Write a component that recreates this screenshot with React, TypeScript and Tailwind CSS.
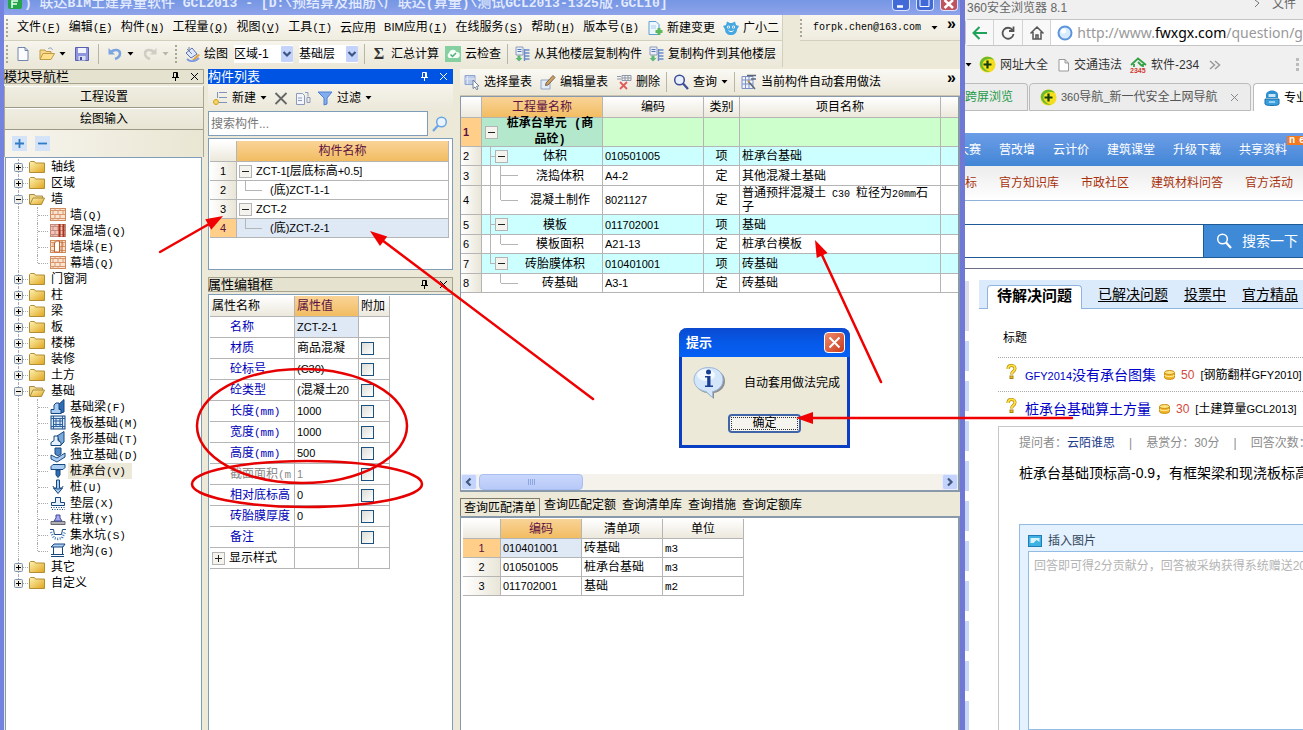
import { Fragment, type ReactNode } from "react";
import clsx from "clsx";

// Splits a label so that latin runs can use a narrower face than the hanzi
function Txt({ children, latin = "text-[11px]" }: { children: string; latin?: string }) {
  return (
    <>
      {children.split(/([\x20-\x7e]+)/).map((part, i) =>
        i % 2 ? (
          <span key={i} className={clsx("whitespace-pre-wrap", latin)}>{part}</span>
        ) : (
          <Fragment key={i}>{part}</Fragment>
        )
      )}
    </>
  );
}

const MONO = "font-['Liberation_Mono','Noto_Sans_CJK_SC',monospace] text-[11px]";

/* ---------- small shared pieces ---------- */

function Caret({ dim }: { dim?: boolean }) {
  return (
    <svg width="7" height="4" viewBox="0 0 7 4" className="shrink-0">
      <path d="M0.5 0h6L3.5 3.5z" fill={dim ? "#b8b5a8" : "#000"} />
    </svg>
  );
}

function Grip() {
  return (
    <svg width="3" height="20" viewBox="0 0 3 20" className="shrink-0">
      {[1, 5, 9, 13, 17].map((y) => (
        <rect key={y} x="0" y={y} width="2" height="2" fill="#a9a695" />
      ))}
    </svg>
  );
}

function Sep() {
  return <span className="h-5 w-px shrink-0 bg-[#b9b6a4]" />;
}

function ToggleBox({ plus }: { plus?: boolean }) {
  return (
    <svg width="13" height="13" viewBox="0 0 13 13" className="shrink-0">
      <rect x="0.5" y="0.5" width="12" height="12" fill="#f4f3ee" stroke="#b4b4b4" />
      <path d={plus ? "M3 6.5h7M6.5 3v7" : "M3 6.5h7"} stroke="#222" />
    </svg>
  );
}

function Pin({ color = "#000" }: { color?: string }) {
  return (
    <svg width="9" height="9" viewBox="0 0 9 9">
      <path d="M2.5 5V0.5h4V5M5.5 0.5V5M1 5.5h7M4.5 5.5V9" fill="none" stroke={color} />
    </svg>
  );
}

function Cross({ color = "#000" }: { color?: string }) {
  return (
    <svg width="9" height="9" viewBox="0 0 9 9">
      <path d="M1 1l7 7M8 1l-7 7" stroke={color} />
    </svg>
  );
}

function PanelTitle({ title, active }: { title: string; active?: boolean }) {
  const color = active ? "#fff" : "#000";
  return (
    <div
      className={clsx(
        "flex h-[15px] shrink-0 items-center border text-[13px] leading-[13px]",
        active ? "border-[#0054e3] bg-[#0054e3] text-white" : "border-[#a5a28f] bg-[#e6e2d0] text-black"
      )}
    >
      <h2 className="-ml-px flex-1">{title}</h2>
      <button type="button" aria-label="固定" className="mr-2.5"><Pin color={color} /></button>
      <button type="button" aria-label="关闭" className="mr-1"><Cross color={color} /></button>
    </div>
  );
}

/* ---------- toolbar icons ---------- */

function Ico({ children, size = 16 }: { children: ReactNode; size?: number }) {
  return (
    <svg width={size} height={size} viewBox="0 0 16 16" fill="none" className="shrink-0">{children}</svg>
  );
}

const NewDoc = () => (
  <Ico><path d="M3 1.5h7l3 3v10H3z" fill="#fbfcff" stroke="#7286ad" /><path d="M10 1.5v3h3" stroke="#7286ad" /></Ico>
);
const OpenDoc = () => (
  <Ico>
    <path d="M1 13V4h5l1 1.5h5V8" fill="#f6d888" stroke="#c09a48" />
    <path d="M1 13.5L4 7.5h11.5L12 13.5z" fill="#ffe08a" stroke="#c09a48" />
    <path d="M9 3c2-2 4-1 4.500 1" stroke="#8a9ab8" />
  </Ico>
);
const SaveDoc = () => (
  <Ico>
    <path d="M1.500 1.500h13v13h-13z" fill="#8f96de" stroke="#5a60b0" />
    <path d="M4 2h8v5H4z" fill="#f2f4ff" /><path d="M4.500 10h7v4.500h-7z" fill="#d8dcf4" /><path d="M6 11h2v3H6z" fill="#454b9a" />
  </Ico>
);
const Undo = ({ dim, flip }: { dim?: boolean; flip?: boolean }) => (
  <Ico>
    <g transform={flip ? "translate(16 0) scale(-1 1)" : undefined}>
      <path d="M4 6c3-3 9-3 9 1.500 0 3-2 4.500-5 5.500" stroke={dim ? "#cfcdc4" : "#7ba4e0"} strokeWidth="2.500" />
      <path d="M1.500 2v6.500h6.500z" fill={dim ? "#cfcdc4" : "#7ba4e0"} />
    </g>
  </Ico>
);
const Paint = () => (
  <Ico>
    <path d="M2 7l6-5 5 6-6 4z" fill="#dfe9fb" stroke="#5674ae" /><path d="M3 3l5 5M5 1v4" stroke="#6f7f9e" />
    <path d="M8 14l6-6 2 1-6 6z" fill="#e8a23c" /><path d="M3 13c3 3 8 3 12-1" stroke="#7d9be0" strokeWidth="2" />
  </Ico>
);
const CloudCheck = () => (
  <Ico>
    <rect width="16" height="16" fill="#86cfa0" />
    <path d="M4 12a3 3 0 0 1 0-5 4 4 0 0 1 7.500-1A3 3 0 0 1 12 12z" fill="#f5fff8" /><path d="M5.500 8.500l2 2 3.500-3.500" stroke="#4fae74" strokeWidth="1.500" />
  </Ico>
);
const CopyFloor = () => (
  <Ico>
    <path d="M2 1h7v8H2z" fill="#e9eefa" stroke="#8f9cb8" /><path d="M3.500 3.500h4M3.500 5.500h4" stroke="#5576b4" />
    <path d="M10.500 4h5M10.500 7h5M10.500 10h5M10.500 13h5M10.500 3v12" stroke="#6a8cca" strokeWidth="1.500" />
    <path d="M3.500 9.500h3v2.500h2L5 15.500 1.500 12h2z" fill="#5cb874" />
  </Ico>
);
const NewChange = () => (
  <Ico>
    <path d="M2 1.500h7l3 3v10H2z" fill="#eef7ff" stroke="#5f9ed0" /><path d="M4 6h5M4 8h5" stroke="#a8cdea" />
    <path d="M12 8v7M8.500 11.500h7" stroke="#5cb85c" strokeWidth="3" />
  </Ico>
);
const Mascot = () => (
  <Ico>
    <path d="M0 6l3-1 1-3.500 3 1.500h2l3-1.500L13 5l3 1-2 3.500c0 3.500-2.500 5.500-6 5.500s-6-2-6-5.500z" fill="#46a8e2" />
    <circle cx="5.500" cy="7" r="1.500" fill="#fff" /><circle cx="10.500" cy="7" r="1.500" fill="#fff" />
    <circle cx="5.500" cy="7" r="0.600" fill="#124a78" /><circle cx="10.500" cy="7" r="0.600" fill="#124a78" />
    <path d="M5.500 10.500c1.500 1.500 3.500 1.500 5 0" stroke="#fff" />
  </Ico>
);
const NewItem = () => (
  <Ico><path d="M7 2.500h8M7 7.500h8M7 12.500h8M5.500 2v6" stroke="#7d93c0" /><path d="M4 9v6M1 12h6" stroke="#d9ab28" strokeWidth="3" /><path d="M4 10v4M2 12h4" stroke="#ffe680" /></Ico>
);
const Delete = () => (
  <Ico><path d="M2.500 3l11 11M13.500 3l-11 11" stroke="#666" strokeWidth="1.800" /></Ico>
);
const CopyItem = () => (
  <Ico><path d="M1.500 3.500h6l2 2v9h-8z" fill="#f2f5fb" stroke="#8b9bbd" /><path d="M3 8h4M3 10.500h4" stroke="#8b9bbd" /><path d="M10 2.500h3v4M12 12.500h3v-5h-3z" stroke="#8b9bbd" /></Ico>
);
const Funnel = () => (
  <Ico><path d="M1 2h14L10 8v6l-3 1V8z" fill="#82aef0" stroke="#4e80d0" /></Ico>
);
const Magnifier = ({ color = "#3d4c94", fill = "#e8f0ff" }: { color?: string; fill?: string }) => (
  <Ico><circle cx="6.500" cy="6" r="4.800" fill={fill} stroke={color} strokeWidth="1.500" /><path d="M10 9.500l5 5.500" stroke={color} strokeWidth="2.200" /></Ico>
);
const PickTable = () => (
  <Ico><path d="M1 1.500h10v9H1z" fill="#bccbe8" stroke="#8fa5cf" /><path d="M3.500 2v8M1 5h10" stroke="#dfe8f8" /><path d="M9 6l6 6-2.500.3 1.500 2.700-1.500.7-1.500-2.700L9 14.500z" fill="#fff" stroke="#70809c" /></Ico>
);
const EditTable = () => (
  <Ico><path d="M1 6h9v9H1z" fill="#e4ecf8" stroke="#94a7c6" /><path d="M6 9l7-7.500 2 2L8 11l-2.500.5z" fill="#d0a060" stroke="#7a6450" /></Ico>
);
const DropTable = () => (
  <Ico><path d="M1 2.500h4M1 5h4M6 1.500h9v5H6zM9 2v4M12 2v4M6 4h9" stroke="#8d97ab" /><path d="M4 8l7 7M11 8l-7 7" stroke="#e05c5c" strokeWidth="1.800" /></Ico>
);
const AutoApply = () => (
  <Ico><path d="M1 2.500h11v12H1zM1 6h11M1 10h11M4.500 3v11M8 3v11" fill="#eef2fc" stroke="#7d8fc4" /><path d="M6 1.500h9M10 5h5M7 7l7 8" stroke="#5c6578" strokeWidth="1.500" /><path d="M6 6l3 1-1 2z" fill="#d8a23a" /></Ico>
);

function Tool({ icon, label, caret, dim }: { icon?: ReactNode; label?: string; caret?: boolean; dim?: boolean }) {
  return (
    <button type="button" className="flex shrink-0 items-center gap-1 whitespace-nowrap" aria-label={label ?? "工具"}>
      {icon}
      {label && <span>{label}</span>}
      {caret && <Caret dim={dim} />}
    </button>
  );
}

function Combo({ id, value }: { id: string; value: string }) {
  return (
    <div className="flex h-[18px] w-[59px] shrink-0 items-center bg-white">
      <label htmlFor={id} className="sr-only">{value}</label>
      <select id={id} className="h-full w-[47px] appearance-none bg-white p-0 text-xs leading-4 outline-none">
        <option>{value}</option>
      </select>
      <svg width="12" height="16" viewBox="0 0 12 16" className="shrink-0">
        <rect width="12" height="16" rx="1" fill="#c3d3fb" />
        <path d="M2.500 6L6 9.500 9.500 6" fill="none" stroke="#3d5583" strokeWidth="2.200" />
      </svg>
    </div>
  );
}

/* ---------- window chrome ---------- */

const menus: [string, string?][] = [
  ["文件", "F"], ["编辑", "E"], ["构件", "N"], ["工程量", "Q"], ["视图", "V"], ["工具", "T"],
  ["云应用"], ["BIM应用", "I"], ["在线服务", "S"], ["帮助", "H"], ["版本号", "B"],
];

function TitleBar() {
  return (
    <header className="flex h-[15px] shrink-0 items-start overflow-hidden bg-gradient-to-b from-[#7596e4] to-[#8fa3ea] pl-1 text-[#e3ebff]">
      <svg width="14" height="10" viewBox="0 0 14 10" className="shrink-0">
        <path d="M0 0h14v7a2 2 0 0 1-2 2H2a2 2 0 0 1-2-2z" fill="#25a549" />
        <path d="M4 8V1h6M4 4h5" fill="none" stroke="#e8fff0" strokeWidth="1.500" />
      </svg>
      <h1 className="flex-1 pl-0.5 text-sm leading-[5px] font-medium whitespace-nowrap">
        <Txt latin="font-['Liberation_Mono',monospace] text-[13px] font-bold">
          {") 联达BIM土建算量软件 GCL2013 - [D:\\预结算及抽筋\\广联达(算量)\\测试GCL2013-1325版.GCL10]"}
        </Txt>
      </h1>
      <div className="flex gap-1.5 pr-0.5">
        {["最小化", "最大化", "关闭"].map((name, i) => (
          <button
            key={name}
            type="button"
            aria-label={name}
            className={clsx("h-[11px] w-[18px] rounded-b border border-t-0 border-[#dbe4ff]", i === 2 ? "bg-[#c0545c]" : "bg-[#4169d8]")}
          >
            <svg width="16" height="10" viewBox="0 0 16 10">
              <path d={["M4 6.500h6", "M3 0v6.500h9V0", "M3.500 0L12 8M12 0L3.500 8"][i]} fill="none" stroke="#fff" strokeWidth={i === 1 ? 1 : 2.500} />
            </svg>
          </button>
        ))}
      </div>
    </header>
  );
}

function MenuBar() {
  return (
    <div className="flex h-[26px] shrink-0">
      <nav className="flex w-[779px] items-center gap-2 border-r border-b border-[#d3cfbd] bg-gradient-to-b from-[#fbfaf6] to-[#efecdf] pl-0.5 whitespace-nowrap">
        <Grip />
        {menus.map(([label, key]) => (
          <button key={label} type="button" className="flex items-baseline">
            <Txt>{label}</Txt>
            {key && <span className={MONO}>(<u>{key}</u>)</span>}
          </button>
        ))}
        <Tool icon={<NewChange />} label="新建变更" />
        <Tool icon={<Mascot />} label="广小二" />
      </nav>
      <div className="ml-[17px] flex flex-1 items-center border-b border-[#d3cfbd] bg-gradient-to-b from-[#f8f6ee] to-[#efecdf]">
        <Grip />
        <button type="button" className="ml-2.5 flex items-center gap-2.5 font-['Liberation_Mono',monospace] text-[10px]">
          forpk.chen@163.com <Caret />
        </button>
        <span className="mr-1 mb-2 ml-auto text-base leading-4 font-bold">»</span>
      </div>
    </div>
  );
}

function MainToolbar() {
  return (
    <div className="flex h-[26px] shrink-0 items-center">
      <div className="flex h-full w-[779px] items-center border-r border-[#d3cfbd] bg-gradient-to-b from-[#f6f4ec] to-[#ebe8d9] pl-0.5">
        <Grip />
        <div className="ml-1.5 flex items-center gap-2">
          <Tool icon={<NewDoc />} />
          <Tool icon={<OpenDoc />} caret />
          <Tool icon={<SaveDoc />} />
          <Sep />
          <Tool icon={<Undo />} caret />
          <Tool icon={<Undo dim flip />} caret dim />
        </div>
        <div className="ml-1.5 flex items-center gap-1.5">
          <Grip />
          <Tool icon={<Paint />} label="绘图" />
          <Combo id="area" value="区域-1" />
          <Combo id="floor" value="基础层" />
          <Sep />
          <Tool icon={<span className="w-4 text-center font-['Liberation_Serif',serif] text-base leading-4 font-bold text-[#333]">Σ</span>} label="汇总计算" />
          <Tool icon={<CloudCheck />} label="云检查" />
          <Sep />
          <Tool icon={<CopyFloor />} label="从其他楼层复制构件" />
          <Tool icon={<CopyFloor />} label="复制构件到其他楼层" />
        </div>
      </div>
    </div>
  );
}

/* ---------- module tree ---------- */

function Folder({ open }: { open?: boolean }) {
  return (
    <svg width="16" height="12" viewBox="0 0 16 12" className="shrink-0">
      <defs>
        <linearGradient id="fold" x1="0" y1="0" x2="1" y2="1">
          <stop offset="0" stopColor="#fff3b4" />
          <stop offset="1" stopColor="#e0a51e" />
        </linearGradient>
      </defs>
      {open ? (
        <>
          <path d="M0.500 11V1.500h5l1 1.500h7V6" fill="#f5dc8c" stroke="#a88b3d" />
          <path d="M1 11.500L4 5h11.500L12.500 11.500z" fill="url(#fold)" stroke="#a88b3d" />
        </>
      ) : (
        <path d="M0.500 11.500V1.500l1-1h4l1 1.500h9v9.500z" fill="url(#fold)" stroke="#b38f33" />
      )}
    </svg>
  );
}

const brick = "M0 3.500h15M0 7.500h15M0 11.500h15M5 1v3M10 1v3M3 4v4M8 4v4M13 4v4M5 8v4M10 8v4M3 12v2M8 12v2";
const blue = { fill: "#a9cdf2", stroke: "#17477f" };
const leafIcons: Record<string, ReactNode> = {
  wall: <><rect x="0.500" y="1.500" width="15" height="12" fill="#fbe3d2" stroke="#d08a5c" /><path d={brick} stroke="#d9966a" /></>,
  warm: <><rect x="0.500" y="1.500" width="15" height="12" fill="#f4c4b4" stroke="#c58878" /><path d={brick} stroke="#c08d84" /><path d="M9.500 1v13M13.500 1v13" stroke="#a8341c" strokeWidth="2" /></>,
  pier: <><rect x="0.500" y="1.500" width="15" height="12" fill="#fbe3d2" stroke="#d08a5c" /><path d={brick} stroke="#d9966a" /><path d="M4.500 13V4l2-2h3v11zM12 2v12" fill="#fff" stroke="#c0602c" /></>,
  beam: <><path d="M8 6l6-5.500V13l-4 1.500z" fill="#2f6db4" stroke="#17477f" /><path d="M1 14.500v-4h3V6l2-2h3v6.500h2v4z" {...blue} /></>,
  raft: <><rect x="1" y="1" width="14" height="13" fill="#d6e8fa" stroke="#17477f" /><path d="M3.500 1v13M6 3.500v8M10 3.500v8M12.500 1v13M1 3.500h14M3 6h10M3 9.500h10M1 11.500h14" stroke="#2c5f9c" /></>,
  strip: <><path d="M7 5l7-4.500V11l-3 3z" fill="#7aaada" stroke="#17477f" /><path d="M1 14.500v-3l3-2V5h4v4.500l3 2v3z" fill="#e4f0fc" stroke="#17477f" /></>,
  solo: <><path d="M1 8l6 3 8-5v4l-8 5-6-3z" {...blue} /><path d="M5 1h6v6l-3 2-3-2z" fill="#4f88c6" stroke="#17477f" /></>,
  cap: <><path d="M1 3.500l2-2h12v3l-2 2H1z" {...blue} /><path d="M6 7h4v5l-2 2.500L6 12z" fill="#2f6db4" stroke="#17477f" /></>,
  pile: <><path d="M6.500 1h3v8h3L8 14.500 3.500 9h3z" {...blue} /><path d="M3 7c0 4 10 4 10 0" stroke="#17477f" /></>,
  pad: <><path d="M5.500 2.500h5v5h4v3h-13v-3h4z" fill="#e4f0fc" stroke="#17477f" /><path d="M1 12.500h14M2 14.500h13" stroke="#17477f" strokeDasharray="1 1.500" /></>,
  pedestal: <><path d="M1 10.500h14v3H1z" fill="#b0b0b6" stroke="#66666c" /><path d="M4 10l2-3V4h4v3l2 3z" fill="#a9a9f0" stroke="#3b4a9a" /></>,
  pit: <><path d="M0 2.500h3.500l1 5h7l1-5H16" stroke="#17477f" /><path d="M1 5l3 6 4 1 4-1 3-6" stroke="#4178b8" strokeWidth="2.500" strokeDasharray="1 1.500" /></>,
  trench: <><path d="M1 4l3-3h11l-2 3zM3.500 4v8M12.500 4v8" {...blue} /><path d="M1 13.500h13M1 11.500h13" stroke="#17477f" /></>,
};

type Node = { label: string; key?: string; icon?: string; open?: boolean; last?: boolean; selected?: boolean };

const tree: Node[] = [
  { label: "轴线" },
  { label: "区域" },
  { label: "墙", open: true },
  { label: "墙", key: "Q", icon: "wall" },
  { label: "保温墙", key: "Q", icon: "warm" },
  { label: "墙垛", key: "E", icon: "pier" },
  { label: "幕墙", key: "Q", icon: "wall", last: true },
  { label: "门窗洞" },
  { label: "柱" },
  { label: "梁" },
  { label: "板" },
  { label: "楼梯" },
  { label: "装修" },
  { label: "土方" },
  { label: "基础", open: true },
  { label: "基础梁", key: "F", icon: "beam" },
  { label: "筏板基础", key: "M", icon: "raft" },
  { label: "条形基础", key: "T", icon: "strip" },
  { label: "独立基础", key: "D", icon: "solo" },
  { label: "桩承台", key: "V", icon: "cap", selected: true },
  { label: "桩", key: "U", icon: "pile" },
  { label: "垫层", key: "X", icon: "pad" },
  { label: "柱墩", key: "Y", icon: "pedestal" },
  { label: "集水坑", key: "S", icon: "pit" },
  { label: "地沟", key: "G", icon: "trench", last: true },
  { label: "其它" },
  { label: "自定义", last: true },
];

function TreeRow({ node }: { node: Node }) {
  if (node.icon) {
    return (
      <li className="flex h-4 items-center">
        <span className="ml-3 h-full w-[19px] border-l border-dotted border-[#aaa]" />
        <span className={clsx("self-start border-l border-dotted border-[#aaa]", node.last ? "h-1/2" : "h-full")} />
        <span className="mr-0.5 w-[10px] border-t border-dotted border-[#aaa]" />
        <Ico>{leafIcons[node.icon]}</Ico>
        <span className={clsx("ml-0.5 h-4 pr-1.5 pl-0.5", node.selected && "bg-[#ece9d8]")}>
          {node.label}
          <span className={MONO}>({node.key})</span>
        </span>
      </li>
    );
  }
  return (
    <li className="flex h-4 items-center">
      <span className="ml-2 flex h-full w-[9px] flex-col items-center">
        <span className="flex-1 border-l border-dotted border-[#aaa]" />
        <svg width="9" height="9" viewBox="0 0 9 9" className="shrink-0">
          <rect x="0.500" y="0.500" width="8" height="8" rx="1" fill="#f1efe6" stroke="#7f93ad" />
          <path d={node.open ? "M2 4.500h5" : "M2 4.500h5M4.500 2v5"} stroke="#000" />
        </svg>
        <span className={clsx("flex-1", !node.last && "border-l border-dotted border-[#aaa]")} />
      </span>
      <span className="mr-px w-[5px] border-t border-dotted border-[#aaa]" />
      <Folder open={node.open} />
      <span className="ml-1.5">{node.label}</span>
    </li>
  );
}

function ModulePanel() {
  return (
    <aside className="flex w-[200px] shrink-0 flex-col">
      <PanelTitle title="模块导航栏" />
      <div className="mt-0.5 flex flex-col border-x border-[#aaa793]">
        {["工程设置", "绘图输入"].map((t) => (
          <button key={t} type="button" className="h-[22px] border-b border-[#9c9986] bg-gradient-to-b from-[#f0eee2] to-[#e8e5d4] shadow-[inset_0_1px_0_#fff]">{t}</button>
        ))}
      </div>
      <div className="flex h-[27px] shrink-0 items-center gap-2 border-x border-[#aaa793] bg-gradient-to-r from-[#f7f5ee] to-[#e9e6d3] pl-[7px]">
        {["M3 7.500h9M7.500 3v9", "M3 7.500h9"].map((d, i) => (
          <button key={d} type="button" aria-label={i ? "折叠" : "展开"}>
            <svg width="15" height="15" viewBox="0 0 15 15">
              <rect width="15" height="15" fill="#d5e3f8" />
              <path d={d} stroke="#2f7cc4" strokeWidth="1.800" />
            </svg>
          </button>
        ))}
      </div>
      <ul className="mr-0.5 ml-px min-h-0 flex-1 overflow-hidden border border-b-0 border-[#7f9db9] bg-white pt-px">
        {tree.map((node, i) => (
          <TreeRow key={i} node={node} />
        ))}
      </ul>
    </aside>
  );
}

/* ---------- grids ---------- */

const cell = "border-r border-b border-[#b5b5b5] p-0";
const head = "bg-gradient-to-b from-white to-[#ece8dc] font-normal";
const headOn = "bg-gradient-to-b from-[#f9d396] to-[#f2bd61] font-normal text-[#5e1040]";
const num = "bg-gradient-to-r from-white to-[#e9e6d8] text-[11px]";
const numOn = "bg-[#ffcf8a] text-[11px] text-[#5e1040]";

const components = [
  { name: "ZCT-1[层底标高+0.5]" },
  { name: "(底)ZCT-1-1", leaf: true },
  { name: "ZCT-2" },
  { name: "(底)ZCT-2-1", leaf: true, on: true },
];

function ComponentGrid() {
  return (
    <div className="h-[132px] shrink-0 border border-[#7f9db9] bg-white pt-0.5 pr-[3px] pl-px">
      <table className="w-full table-fixed border-separate border-spacing-0">
        <colgroup><col className="w-[27px]" /><col /></colgroup>
        <thead>
          <tr>
            <th className={clsx(cell, head, "h-[21px]")} />
            <th className={clsx(cell, headOn)}>构件名称</th>
          </tr>
        </thead>
        <tbody>
          {components.map((c, i) => (
            <tr key={c.name}>
              <td className={clsx(cell, "h-[19px] text-center", c.on ? numOn : num)}>{i + 1}</td>
              <td className={clsx(cell, c.on && "bg-[#dfe8f5]")}>
                <div className="flex h-[18px] items-center pl-0.5">
                  {c.leaf ? (
                    <span className="mr-2 ml-1.5 h-[10px] w-[17px] self-start border-b border-l border-[#b5b5b5]" />
                  ) : (
                    <span className="mr-1 flex"><ToggleBox /></span>
                  )}
                  <span><Txt>{c.name}</Txt></span>
                </div>
              </td>
            </tr>
          ))}
        </tbody>
      </table>
    </div>
  );
}

const props: { name: string; value?: string; check?: boolean; tone?: string; on?: boolean }[] = [
  { name: "名称", value: "ZCT-2-1", on: true },
  { name: "材质", value: "商品混凝", check: true },
  { name: "砼标号", value: "(C30)", check: true },
  { name: "砼类型", value: "(混凝土20", check: true },
  { name: "长度(mm)", value: "1000", check: true },
  { name: "宽度(mm)", value: "1000", check: true },
  { name: "高度(mm)", value: "500", check: true },
  { name: "截面面积(m", value: "1", check: true, tone: "text-[#8a8a8a]" },
  { name: "相对底标高", value: "0", check: true },
  { name: "砖胎膜厚度", value: "0", check: true },
  { name: "备注", check: true },
];

function PropertyGrid() {
  return (
    <div className="mt-0.5 min-h-0 flex-1 overflow-hidden border border-b-0 border-[#7f9db9] bg-white pt-px pl-px">
      <table className="table-fixed border-separate border-spacing-0 whitespace-nowrap">
        <colgroup><col className="w-[85px]" /><col className="w-[64px]" /><col className="w-[31px]" /></colgroup>
        <thead>
          <tr className="text-left">
            <th className={clsx(cell, head, "h-[21px] pl-0.5")}>属性名称</th>
            <th className={clsx(cell, headOn, "pl-0.5")}>属性值</th>
            <th className={clsx(cell, head, "pl-0.5")}>附加</th>
          </tr>
        </thead>
        <tbody>
          {props.map((p) => (
            <tr key={p.name}>
              <td className={clsx(cell, "h-[21px] pl-5", p.tone ?? "text-[#0000b8]")}><Txt latin={MONO}>{p.name}</Txt></td>
              <td className={clsx(cell, "pl-0.5", p.on && "bg-[#dfe8f5]", p.tone)}><Txt>{p.value ?? ""}</Txt></td>
              <td className={cell}>
                {p.check && (
                  <input
                    type="checkbox"
                    aria-label={p.name}
                    className="ml-0.5 block size-[13px] appearance-none border border-[#1c5180] bg-gradient-to-br from-[#dcdcd7] to-white"
                  />
                )}
              </td>
            </tr>
          ))}
          <tr>
            <td className={clsx(cell, "h-[21px]")}>
              <div className="flex items-center gap-1 pl-0.5">
                <ToggleBox plus />
                显示样式
              </div>
            </td>
            <td className={cell} />
            <td className={cell} />
          </tr>
        </tbody>
      </table>
    </div>
  );
}

function ComponentPanel() {
  return (
    <section className="flex w-[245px] shrink-0 flex-col">
      <PanelTitle title="构件列表" active />
      <div className="flex h-[27px] shrink-0 items-center gap-1.5 bg-gradient-to-b from-[#f6f4ec] to-[#ebe8d9] pl-1">
        <Tool icon={<NewItem />} label="新建" caret />
        <Tool icon={<Delete />} />
        <Tool icon={<CopyItem />} />
        <Tool icon={<Funnel />} label="过滤" caret />
      </div>
      <div className="mb-0.5 flex h-[25px] shrink-0 items-center">
        <label htmlFor="search-component" className="sr-only">搜索构件</label>
        <input
          id="search-component"
          placeholder="搜索构件..."
          className="h-full min-w-0 flex-1 border border-[#7f9db9] bg-white px-0.5 text-xs outline-none placeholder:text-[#777]"
        />
        <button type="button" aria-label="搜索" className="flex w-[25px] -scale-x-100 justify-center">
          <Magnifier color="#6aa6e6" fill="#eaf4ff" />
        </button>
      </div>
      <ComponentGrid />
      <div className="mt-[7px] flex flex-col"><PanelTitle title="属性编辑框" /></div>
      <PropertyGrid />
    </section>
  );
}

type Item = { level: 0 | 1 | 2; name: string; code?: string; kind?: string; title?: string; tall?: boolean; last?: boolean; end?: boolean };

const items: Item[] = [
  { level: 0, name: "桩承台单元 (商品砼)", tall: true },
  { level: 1, name: "体积", code: "010501005", kind: "项", title: "桩承台基础" },
  { level: 2, name: "浇捣体积", code: "A4-2", kind: "定", title: "其他混凝土基础" },
  { level: 2, name: "混凝土制作", code: "8021127", kind: "定", title: "普通预拌混凝土 C30 粒径为20mm石子", tall: true, last: true },
  { level: 1, name: "模板", code: "011702001", kind: "项", title: "基础" },
  { level: 2, name: "模板面积", code: "A21-13", kind: "定", title: "桩承台模板", last: true },
  { level: 1, name: "砖胎膜体积", code: "010401001", kind: "项", title: "砖基础", last: true },
  { level: 2, name: "砖基础", code: "A3-1", kind: "定", title: "砖基础", last: true, end: true },
];

const line = "border-[#b5b5b5]";

function Branch({ item }: { item: Item }) {
  if (item.level === 0) return <span className="ml-[3px] flex self-center"><ToggleBox /></span>;
  if (item.level === 1) {
    return (
      <>
        <span className={clsx("ml-2 w-px border-l", line, item.last ? "h-1/2" : "h-full")} />
        <span className={clsx("w-[4px] self-center border-t", line)} />
        <span className="flex self-center"><ToggleBox /></span>
      </>
    );
  }
  return (
    <>
      <span className={clsx("ml-2 w-[10px] border-l", item.end ? "border-transparent" : line)} />
      <span className={clsx("border-l", line, item.last ? "h-1/2" : "h-full")} />
      <span className={clsx("w-[17px] self-center border-t", line)} />
    </>
  );
}

function QuantityGrid() {
  const tint = ["bg-[#ccffcc]", "bg-[#ccffff]", "bg-white"];
  return (
    <table className="w-full table-fixed border-separate border-spacing-0">
      <colgroup>
        <col className="w-[21px]" /><col className="w-[121px]" /><col className="w-[101px]" /><col className="w-[36px]" /><col className="w-[201px]" /><col />
      </colgroup>
      <thead>
        <tr>
          <th className={clsx(cell, head, "h-[21px]")} />
          <th className={clsx(cell, headOn)}>工程量名称</th>
          <th className={clsx(cell, head)}>编码</th>
          <th className={clsx(cell, head)}>类别</th>
          <th className={clsx(cell, head)}>项目名称</th>
          <th className={clsx(cell, head, "border-r-0")} />
        </tr>
      </thead>
      <tbody>
        {items.map((it, i) => (
          <tr key={i} className={tint[it.level]}>
            <td className={clsx(cell, "pl-0.5", i === 0 ? [numOn, "font-bold"] : num)}>{i + 1}</td>
            <td className={clsx(cell, i === 0 && "bg-[#b3e8cd]")}>
              <div className={clsx("flex", it.tall ? "h-[28px]" : i % 2 ? "h-[18px]" : "h-[19px]")}>
                <Branch item={it} />
                <span className={clsx("flex-1 self-center px-1 text-center leading-3", i === 0 && "font-bold")}>
                  <Txt latin="font-['Liberation_Mono',monospace] text-xs">{it.name}</Txt>
                </span>
              </div>
            </td>
            <td className={clsx(cell, "pl-0.5")}><Txt>{it.code ?? ""}</Txt></td>
            <td className={clsx(cell, "text-center leading-3")}>{it.kind}</td>
            <td className={clsx(cell, "pl-0.5 leading-3")}><Txt latin="font-['Liberation_Mono',monospace] text-[10px]">{it.title ?? ""}</Txt></td>
            <td className={clsx(cell, "border-r-0")} />
          </tr>
        ))}
      </tbody>
    </table>
  );
}

function ScrollArrow({ right }: { right?: boolean }) {
  return (
    <button type="button" aria-label={right ? "向右" : "向左"}>
      <svg width="16" height="16" viewBox="0 0 16 16">
        <rect x="0.500" y="0.500" width="15" height="15" rx="2" fill="#c3d3fb" stroke="#e6eeff" />
        <path d={right ? "M6 4.500L9.500 8 6 11.500" : "M9.500 4.500L6 8l3.500 3.500"} fill="none" stroke="#41597f" strokeWidth="2.200" />
      </svg>
    </button>
  );
}

const queryTabs = ["查询匹配定额", "查询清单库", "查询措施", "查询定额库"];
const matches = [
  ["010401001", "砖基础", "m3"],
  ["010501005", "桩承台基础", "m3"],
  ["011702001", "基础", "m2"],
];

function QuantityPanel() {
  return (
    <main className="flex min-w-0 flex-1 flex-col">
      <div className="flex h-[27px] shrink-0 items-center gap-2 border-b border-[#c9c5b2] bg-gradient-to-b from-[#faf9f4] to-[#ebe8d9] pl-1">
        <Tool icon={<PickTable />} label="选择量表" />
        <Tool icon={<EditTable />} label="编辑量表" />
        <Tool icon={<DropTable />} label="删除" />
        <div className="-ml-0.5 flex items-center gap-1.5">
          <Sep />
          <Tool icon={<Magnifier />} label="查询" caret />
          <Sep />
          <Tool icon={<AutoApply />} label="当前构件自动套用做法" />
        </div>
        <span className="mr-1 mb-2 ml-auto text-base leading-4 font-bold">»</span>
      </div>
      <div className="flex h-[396px] shrink-0 flex-col border border-r-2 border-b-2 border-[#8799ab] bg-white">
        <QuantityGrid />
        <div className="mt-auto flex h-4 items-center bg-[#f4f2ea]">
          <ScrollArrow />
          <span className="ml-0.5 flex h-4 w-[104px] items-center justify-center gap-px rounded-sm border border-[#a9bff2] bg-gradient-to-b from-[#c9d7fc] to-[#b7c9f8]">
            {[0, 1, 2, 3].map((i) => <span key={i} className="h-1.5 w-px bg-[#8ea6e0]" />)}
          </span>
          <span className="ml-auto flex"><ScrollArrow right /></span>
        </div>
      </div>
      <div className="mt-1 flex h-[20px] shrink-0 items-start gap-1.5 whitespace-nowrap" role="tablist">
        <button type="button" role="tab" aria-selected className="mt-0.5 h-[18px] border border-b-0 border-[#7f7c6c] px-[3px] leading-4">查询匹配清单</button>
        {queryTabs.map((t, i) => (
          <button key={t} type="button" role="tab" className={clsx("mt-px", i === 0 && "-ml-0.5")}>{t}</button>
        ))}
      </div>
      <div className="min-h-0 flex-1 border-t-2 border-r-2 border-l border-[#8799ab] bg-white pt-px pl-0.5">
        <table className="table-fixed border-separate border-spacing-0">
          <colgroup><col className="w-[38px]" /><col className="w-[81px]" /><col className="w-[81px]" /><col className="w-[81px]" /></colgroup>
          <thead>
            <tr>
              <th className={clsx(cell, head, "h-[20px]")} />
              <th className={clsx(cell, headOn)}>编码</th>
              <th className={clsx(cell, head)}>清单项</th>
              <th className={clsx(cell, head)}>单位</th>
            </tr>
          </thead>
          <tbody>
            {matches.map(([code, name, unit], i) => (
              <tr key={code}>
                <td className={clsx(cell, "h-[19px] text-center", i === 0 ? numOn : num)}>{i + 1}</td>
                <td className={clsx(cell, "pl-0.5", i === 0 && "bg-[#dfe8f5]")}><Txt>{code}</Txt></td>
                <td className={clsx(cell, "pl-0.5")}>{name}</td>
                <td className={clsx(cell, "pl-0.5")}><Txt latin={MONO}>{unit}</Txt></td>
              </tr>
            ))}
          </tbody>
        </table>
      </div>
    </main>
  );
}

function MessageBox() {
  return (
    <div role="dialog" aria-label="提示" className="absolute top-[328px] left-[679px] w-[171px] rounded-t-lg border-[3px] border-t-0 border-[#0a3fc4] bg-[#ece9d8]">
      <div className="-mx-[3px] flex h-[29px] items-center justify-between rounded-t-lg bg-gradient-to-b from-[#0a4ad0] via-[#0659e8] to-[#0560f5] pr-[5px] pl-[7px] text-[13px] font-bold text-white">
        提示
        <button type="button" aria-label="关闭" className="flex size-[21px] items-center justify-center rounded border border-white bg-gradient-to-br from-[#f08a6a] to-[#c8371a]">
          <svg width="13" height="13" viewBox="0 0 13 13"><path d="M1.500 1.500l10 10M11.500 1.500l-10 10" stroke="#fff" strokeWidth="2" /></svg>
        </button>
      </div>
      <div className="flex h-[88px] flex-col items-center">
        <div className="flex w-full items-center gap-[19px] pt-[9px] pl-[11px]">
          <svg width="32" height="34" viewBox="0 0 32 34" className="shrink-0">
            <path d="M17 3c9 0 15 5 15 12s-5 11-11 12v6l-7-6C7 26 2 21 2 15S8 3 17 3z" fill="#8d8f93" />
            <path d="M15.500 1.500c8.500 0 14.500 5 14.500 12s-5 11-10.500 12v6l-6.500-6C6 24.500 1 20 1 13.500s6-12 14.500-12z" fill="#d3e6fa" stroke="#9db7d8" />
            <ellipse cx="13" cy="9" rx="9" ry="6" fill="#fff" opacity="0.700" />
            <circle cx="15.500" cy="6" r="2.500" fill="#1c3f94" />
            <path d="M12 10h5.500v9.500H20V21h-8v-1.500h2.200V11.500H12z" fill="#1c3f94" />
          </svg>
          <span className="whitespace-nowrap">自动套用做法完成</span>
        </div>
        <button type="button" className="mt-[14px] h-[19px] w-[73px] rounded border-2 border-[#3f64a8] bg-[#f5f4ee] p-px leading-3">
          <span className="block border border-dotted border-[#333] leading-[11px]">确定</span>
        </button>
      </div>
    </div>
  );
}

/* ---------- browser behind ---------- */

const Logo360 = () => (
  <svg width="17" height="17" viewBox="0 0 17 17" className="shrink-0">
    <circle cx="8.500" cy="8.500" r="8" fill="#f5dc1c" />
    <path d="M1 6a8 8 0 0 1 14-2c-4-2-9-1-10 4s3 8 7 7A8 8 0 0 1 1 6z" fill="#6cba30" />
    <circle cx="8.500" cy="8.500" r="5" fill="#f5e31c" />
    <path d="M8.500 4.500v8M4.500 8.500h8" stroke="#123d14" strokeWidth="2.200" />
  </svg>
);

const Question = () => (
  <svg width="11" height="16" viewBox="0 0 11 16" className="shrink-0">
    <path d="M2 5c0-5 7-4.500 7-.5 0 3-3.500 3-3.500 6" fill="none" stroke="#a98310" strokeWidth="3" />
    <path d="M2 5c0-5 7-4.500 7-.5 0 3-3.500 3-3.500 6" fill="none" stroke="#ffe13a" strokeWidth="1.800" />
    <rect x="4" y="12" width="3" height="2.500" fill="#f0c420" stroke="#a98310" />
  </svg>
);

const Coins = () => (
  <svg width="11" height="10" viewBox="0 0 11 10" className="shrink-0">
    <path d="M0.500 2.500v5c0 2.500 10 2.500 10 0v-5z" fill="#f1b728" stroke="#c98d12" />
    <ellipse cx="5.500" cy="2.500" rx="5" ry="2" fill="#ffe680" stroke="#c98d12" />
    <path d="M0.500 5c0 2 10 2 10 0" fill="none" stroke="#fff0a8" />
  </svg>
);

const questions = [
  { title: "GFY2014没有承台图集", score: 50, tag: "[钢筋翻样GFY2010]" },
  { title: "桩承台基础算土方量", score: 30, tag: "[土建算量GCL2013]" },
];

function BrowserWindow() {
  return (
    <section className="flex w-[338px] shrink-0 flex-col overflow-hidden bg-[#f0f0f0] whitespace-nowrap text-[#333]">
      <div className="flex h-[19px] shrink-0 items-start pl-0.5 leading-[9px] text-[#666]">
        <span><Txt latin="text-xs">360安全浏览器 8.1</Txt></span>
        <svg width="6" height="8" viewBox="0 0 6 8" className="ml-auto"><path d="M1 0l4 3-4 4" fill="none" stroke="#777" /></svg>
        <span className="ml-3 w-[31px]">文件</span>
      </div>
      <div className="flex h-[27px] shrink-0 items-center rounded-l border border-r-0 border-[#c4c4c4] bg-white">
        {[
          <path key="b" d="M15 8H1.500M7.500 2L1.500 8l6 6" stroke="#1fa35a" strokeWidth="2" />,
          <path key="r" d="M12.500 5A5.500 5.500 0 1 0 13.500 9M13.500 1.500V6H9" stroke="#555" strokeWidth="1.800" />,
          <path key="h" d="M1.500 8.500L8 2l6.500 6.500M4 7v7h8V7M7 14v-4h2v4" stroke="#555" strokeWidth="1.500" />,
        ].map((d, i) => (
          <button key={i} type="button" aria-label={["后退", "刷新", "主页"][i]} className="flex h-full w-[31px] items-center justify-center border-r border-[#d4d4d4] bg-[#f8f8f8]">
            <Ico>{d}</Ico>
          </button>
        ))}
        <svg width="16" height="16" viewBox="0 0 16 16" className="ml-1.5 shrink-0">
          <circle cx="8" cy="8" r="6.500" fill="#d8ebff" stroke="#5b93dc" strokeWidth="2" />
          <circle cx="6.500" cy="6" r="2.500" fill="#fff" />
        </svg>
        <span className="ml-1 font-['Noto_Sans',sans-serif] text-sm text-[#999]">
          http://www.<span className="text-black">fwxgx.com</span>/question/g
        </span>
      </div>
      <div className="flex h-[37px] shrink-0 items-center">
        <span className="w-3.5"><Caret /></span>
        <a href="#" className="flex items-center gap-1"><Logo360 />网址大全</a>
        <a href="#" className="ml-2 flex items-center gap-0.5">
          <Ico><path d="M3 2.500h6l3.500 3.500v8H3zM9 2.500V6h3.500" fill="#fff" stroke="#999" /></Ico>交通违法
        </a>
        <a href="#" className="ml-2 flex items-center gap-1">
          <svg width="17" height="16" viewBox="0 0 17 16" className="shrink-0">
            <path d="M1 8l7-6.500L16 8M4 7v3M13 7v3M8 5l4 4" fill="none" stroke="#35a046" strokeWidth="1.800" />
            <text x="0" y="16" fontSize="7" fontWeight="bold" fill="#d2382c">2345</text>
          </svg>
          <span><Txt latin="text-xs">软件-234</Txt></span>
        </a>
        <svg width="12" height="10" viewBox="0 0 12 10" className="ml-2.5"><path d="M1 1l4.500 4L1 9M6 1l4.500 4L6 9" fill="none" stroke="#999" strokeWidth="1.500" /></svg>
        <span className="mr-1 ml-auto"><svg width="3" height="14" viewBox="0 0 3 14"><path d="M1.500 0v14" stroke="#bbb" strokeWidth="3" strokeDasharray="3 2" /></svg></span>
      </div>
      <div className="flex h-[28px] shrink-0 items-stretch">
        <button type="button" className="w-[63px] rounded-tr border border-l-0 border-[#bcbcbc] bg-[#ececec] text-left text-[#1d9a48]">跨屏浏览</button>
        <div className="ml-px flex w-[222px] items-center rounded-t border border-[#bcbcbc] bg-[#ececec] pl-2.5 text-[#555]">
          <Logo360 />
          <span className="ml-1"><Txt>360导航_新一代安全上网导航</Txt></span>
          <button type="button" aria-label="关闭标签" className="ml-3"><Cross color="#888" /></button>
        </div>
        <div className="ml-0.5 flex flex-1 items-center gap-1 overflow-hidden rounded-tl border-t border-l border-[#bcbcbc] bg-white pl-2.5 text-black">
          <Ico>
            <path d="M2 5c0-6 12-6 12 0v3H2z" fill="#2e8fd0" /><path d="M4.500 4h7v3h-7z" fill="#c8e8fa" />
            <path d="M1 9h14v5c0 2-14 2-14 0z" fill="#3aa0df" stroke="#1c6ea8" /><path d="M5 12h6" stroke="#fff" />
          </Ico>
          专业
        </div>
      </div>
      <div className="flex min-h-0 flex-1 flex-col overflow-hidden bg-white pt-[22px]">
        <nav className="-ml-2 flex h-[33px] shrink-0 items-center gap-[18px] bg-gradient-to-b from-[#6c9de6] to-[#4186d6] text-white">
          {["大赛", "营改增", "云计价", "建筑课堂", "升级下载"].map((t) => <a key={t} href="#">{t}</a>)}
          <a href="#" className="flex">
            共享资料<span className="-mt-1.5 flex h-[9px] gap-1 bg-[#f47a20] px-0.5 text-[10px] leading-[8px]"><b>n</b><b>e</b></span>
          </a>
        </nav>
        <nav className="flex h-[35px] shrink-0 items-center gap-[22px] border-b border-[#8fb0d8] bg-gradient-to-b from-[#ececec] to-white text-[#a8320c]">
          {["标", "官方知识库", "市政社区", "建筑材料问答", "官方活动"].map((t) => <a key={t} href="#">{t}</a>)}
        </nav>
        <form className="mt-[23px] flex h-[34px] shrink-0 border-y border-[#1f5a96]">
          <input aria-label="搜索问题" className="w-[239px] border-r border-[#1f5a96] bg-white outline-none" />
          <button type="button" className="flex flex-1 items-center gap-2.5 bg-[#3f8ad6] pl-3 text-sm text-white">
            <Magnifier color="#fff" fill="none" />搜索一下
          </button>
        </form>
        <div className="mt-[10px] flex min-h-0 flex-1 border-t border-[#6c6c84]">
          <div className="flex w-1 shrink-0 flex-col gap-2.5 overflow-hidden pt-3">
            <span className="h-[50px] shrink-0 bg-[#dcdcec]" />
            {Array.from({ length: 12 }, (_, i) => <span key={i} className="h-[30px] shrink-0 bg-[#c8d6f8]" />)}
          </div>
          <div className="ml-[10px] flex flex-1 flex-col overflow-hidden pt-[11px]">
            <div className="flex h-[29px] shrink-0 items-center gap-4 border-b border-[#8fb4e0] bg-[#dcebfb] pl-2 text-sm text-black">
              <button type="button" className="-mb-px h-[24px] self-end rounded-t-sm border border-b-0 border-[#8fb4e0] bg-white px-[9px] pb-1 text-[15px] leading-[18px] font-bold">待解决问题</button>
              {["已解决问题", "投票中", "官方精品"].map((t) => <a key={t} href="#" className="underline underline-offset-2">{t}</a>)}
            </div>
            <div className="ml-[19px] flex h-[49px] shrink-0 items-center border-b border-dotted border-[#aaa] pt-2.5 pl-[5px] text-black">标题</div>
            {questions.map((q, i) => (
              <div key={q.score} className={clsx("ml-[19px] flex h-[34px] shrink-0 items-center pl-2 text-black", i === 0 && "border-b border-dotted border-[#aaa]")}>
                <span className="mb-1.5"><Question /></span>
                <a href="#" className="ml-2 text-sm text-[#0000c8]"><Txt>{q.title}</Txt></a>
                <span className="ml-2 flex"><Coins /></span>
                <span className="mx-1.5 text-[#d24a40]">{q.score}</span>
                <span><Txt>{q.tag}</Txt></span>
              </div>
            ))}
            <article className="ml-[19px] flex flex-1 flex-col border-t border-l border-[#c6c6c6] pt-2 pl-5">
              <p className="text-[#8c8c8c]">
                提问者：<a href="#" className="text-[#1c3c8c]">云陌谁思</a>
                <span className="mx-3.5">|</span>悬赏分：30分<span className="mx-3.5">|</span>回答次数：1
              </p>
              <p className="mt-3 text-sm text-black">桩承台基础顶标高-0.9，有框架梁和现浇板标高</p>
              <div className="mt-[41px] flex flex-1 flex-col border-t border-l border-[#93bce4] bg-[#e4f1fe] pt-2 pl-2">
                <button type="button" className="flex items-center gap-1.5 text-[#33475c]">
                  <svg width="14" height="12" viewBox="0 0 14 12"><rect x="0.500" y="0.500" width="13" height="11" fill="#3fb2e4" stroke="#1f7cb4" /><path d="M2.500 8V3h9v4l-3-2-3 3z" fill="#d8f4ff" /></svg>
                  插入图片
                </button>
                <textarea
                  aria-label="回答"
                  placeholder="回答即可得2分贡献分，回答被采纳获得系统赠送20分"
                  className="mt-0.5 w-[400px] flex-1 resize-none overflow-hidden border border-[#93bce4] bg-white px-[5px] py-1.5 text-xs outline-none placeholder:text-[#b4b4b4]"
                />
              </div>
            </article>
          </div>
        </div>
      </div>
    </section>
  );
}

/* ---------- red pen marks ---------- */

function Arrow({ from, to }: { from: [number, number]; to: [number, number] }) {
  const angle = (Math.atan2(to[1] - from[1], to[0] - from[0]) * 180) / Math.PI;
  return (
    <g fill="#f00000" stroke="#f00000">
      <line x1={from[0]} y1={from[1]} x2={to[0] - 10 * Math.cos((angle * Math.PI) / 180)} y2={to[1] - 10 * Math.sin((angle * Math.PI) / 180)} strokeWidth="2.500" strokeLinecap="round" />
      <path d="M0 0L-17 -6V6z" stroke="none" transform={`translate(${to[0]} ${to[1]}) rotate(${angle})`} />
    </g>
  );
}

export default function App() {
  return (
    <div className="relative flex h-screen overflow-hidden bg-[#ece9d8] font-['Liberation_Sans','Noto_Sans_CJK_SC',sans-serif] text-xs leading-4 text-black">
      <div className="flex min-w-0 flex-1 flex-col border-r-[5px] border-l-4 border-r-[#6f78d4] border-l-[#7583e0]">
        <TitleBar />
        <MenuBar />
        <MainToolbar />
        <div className="flex min-h-0 flex-1 pt-0.5">
          <ModulePanel />
          <div className="ml-1 flex"><ComponentPanel /></div>
          <div className="ml-[7px] flex min-w-0 flex-1"><QuantityPanel /></div>
        </div>
      </div>
      <BrowserWindow />
      <MessageBox />
      <svg className="pointer-events-none absolute inset-0 h-full w-full">
        <Arrow from={[160, 252]} to={[223, 216]} />
        <Arrow from={[593, 399]} to={[370, 231]} />
        <Arrow from={[881, 382]} to={[815, 240]} />
        <Arrow from={[1072, 418]} to={[796, 418]} />
        <ellipse cx="302" cy="426" rx="105" ry="57" fill="none" stroke="#e60000" strokeWidth="2.500" />
        <ellipse cx="307" cy="484" rx="115" ry="23" fill="none" stroke="#e60000" strokeWidth="2.500" />
      </svg>
    </div>
  );
}
